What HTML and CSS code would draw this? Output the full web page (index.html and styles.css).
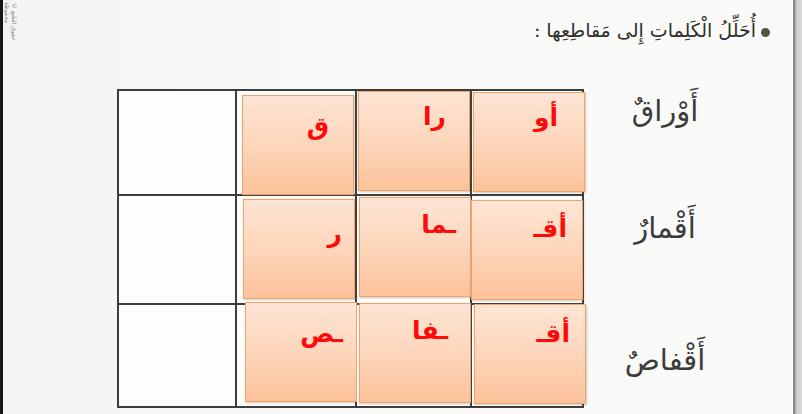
FILE: index.html
```html
<!DOCTYPE html>
<html lang="ar">
<head>
<meta charset="utf-8">
<link rel="stylesheet" href="styles.css">
</head>
<body>
<div class="edge-left"></div>
<div class="page">
  <div class="margin-note">حقوق الطبع © محفوظة</div>
  <div class="content">
    <div class="heading" dir="rtl"><span class="bullet"></span><span class="heading-text">أُحَلِّلُ الْكَلِماتِ إِلى مَقاطِعِها :</span></div>
    <div class="exercise">
      <div class="grid">
        <div class="cell empty"></div>
        <div class="cell"><div class="tile t1">ق</div></div>
        <div class="cell"><div class="tile t2">را</div></div>
        <div class="cell last"><div class="tile t3">أو</div></div>
        <div class="cell empty"></div>
        <div class="cell"><div class="tile t4">ر</div></div>
        <div class="cell"><div class="tile t5">ـما</div></div>
        <div class="cell last"><div class="tile t6">أقـ</div></div>
        <div class="cell empty"></div>
        <div class="cell"><div class="tile t7">ـص</div></div>
        <div class="cell"><div class="tile t8">ـفا</div></div>
        <div class="cell last"><div class="tile t9">أقـ</div></div>
      </div>
      <div class="words" dir="rtl">
        <div class="word w1">أَوْراقٌ</div>
        <div class="word w2">أَقْمارٌ</div>
        <div class="word w3">أَقْفاصٌ</div>
      </div>
    </div>
  </div>
</div>
<div class="edge-right"></div>
</body>
</html>
```

FILE: styles.css
```css
html, body {
  margin: 0;
  padding: 0;
}
body {
  width: 802px;
  height: 414px;
  overflow: hidden;
  display: flex;
  background: #f7f7f5;
  font-family: "DejaVu Sans", sans-serif;
}
.edge-left {
  width: 3px;
  background: #161616;
  flex: none;
}
.page {
  flex: 1;
  display: flex;
  background: linear-gradient(90deg, #f4f4f2 0%, #f8f8f6 40%, #fafaf9 100%);
}
.margin-note {
  writing-mode: vertical-rl;
  font-size: 6px;
  color: #8a8a88;
  padding: 2px 0 0 5px;
  width: 10px;
  height: 60px;
  flex: none;
}
.content {
  flex: 1;
  display: flex;
  flex-direction: column;
  padding-left: 99px;
}
.heading {
  height: 89px;
  display: flex;
  align-items: flex-start;
  padding: 15px 23px 0 0;
  box-sizing: border-box;
  gap: 5px;
}
.bullet {
  width: 9px;
  height: 9px;
  border-radius: 50%;
  background: #55553f;
  margin-top: 13px;
  flex: none;
}
.heading-text {
  font-family: "DejaVu Serif", "DejaVu Sans", serif;
  font-size: 19px;
  color: #2e2e2a;
  line-height: 30px;
}
.exercise {
  display: flex;
  align-items: flex-start;
}
.grid {
  display: grid;
  grid-template-columns: 118px 120px 115px 112px;
  grid-template-rows: 105px 109px 103px;
  border-top: 2px solid #3d3d3d;
  border-left: 2px solid #3d3d3d;
  flex: none;
}
.cell {
  border-right: 2px solid #3d3d3d;
  border-bottom: 2px solid #3d3d3d;
  background: #fdfdfc;
  position: relative;
}
.tile {
  position: absolute;
  width: 112px;
  height: 100px;
  box-sizing: border-box;
  border: 1.5px solid #eba46f;
  background: linear-gradient(180deg, #fde5d4 0%, #fdd6bb 50%, #fcc29a 100%);
  box-shadow: 1px 1px 2px rgba(120, 80, 40, 0.3);
  color: #ff0a0a;
  font-weight: bold;
  font-size: 25px;
  line-height: 30px;
  text-align: right;
  direction: rtl;
  padding: 10px 24px 0 0;
}
.t1 { left: 5px; top: 4px; padding-top: 16px; }
.t2 { left: 1px; top: 0px; padding-right: 23px; }
.t3 { left: 1px; top: 1px; padding-right: 26px; }
.t4 { left: 6px; top: 3px; padding-top: 19px; padding-right: 12px; }
.t5 { left: 2px; top: 1px; padding-top: 12px; padding-right: 14px; }
.t6 { left: -1px; top: 4px; padding-top: 13px; padding-right: 15px; }
.t7 { left: 8px; top: -3px; padding-top: 16px; padding-right: 13px; }
.t8 { left: 2px; top: -2px; padding-top: 12px; padding-right: 22px; }
.t9 { left: 2px; top: -1px; padding-top: 14px; padding-right: 15px; }
.words {
  width: 162px;
  display: flex;
  flex-direction: column;
  align-items: center;
  flex: none;
}
.word {
  font-family: "DejaVu Serif", "DejaVu Sans", serif;
  font-size: 29px;
  color: #3c3c3a;
  line-height: 40px;
}
.w1 { margin-top: 2px; }
.w2 { margin-top: 77px; }
.w3 { margin-top: 92px; }
.edge-right {
  width: 9px;
  flex: none;
  background: linear-gradient(90deg, #8c8c8a 0px, #8c8c8a 2px, #c9c9c7 3px, #dcdcda 100%);
}
```
